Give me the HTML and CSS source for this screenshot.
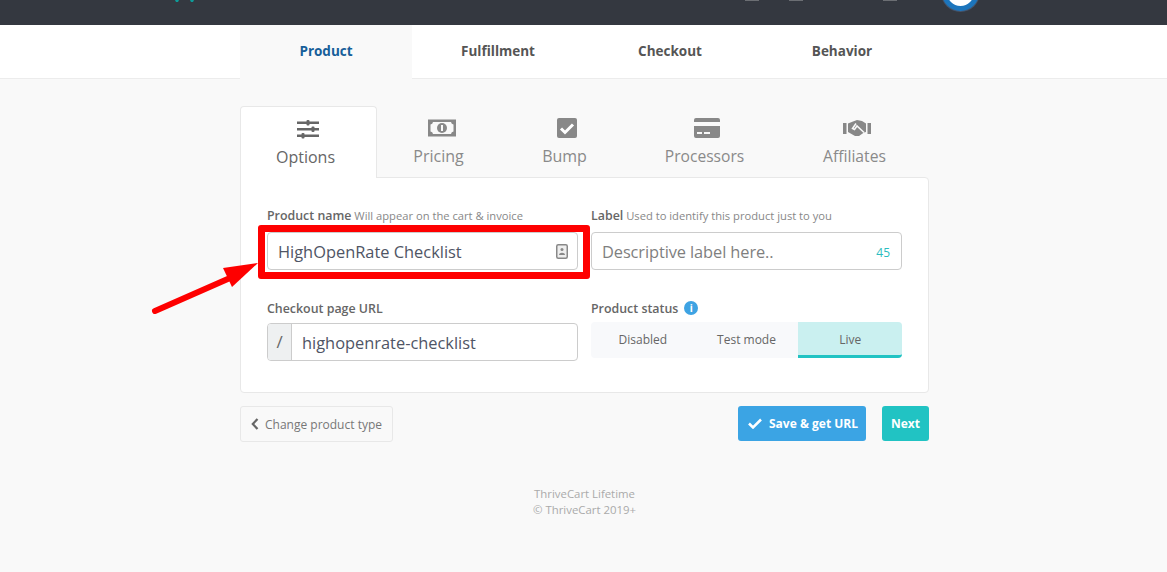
FILE: index.html
```html
<!DOCTYPE html>
<html lang="en">
<head>
  <meta charset="UTF-8" />
  <title>ThriveCart Product</title>
  <link rel="stylesheet" href="styles.css">
</head>
<body>

<header class="topbar">
  <svg class="logo-bit" width="24" height="3" viewBox="0 0 24 3"><path d="M3 0h4L6 2H4zM18 0h4l-1 2h-2z" fill="#0e9a98"/></svg>
  <div class="top-icons">
    <span class="stub"></span>
    <span class="stub"></span>
    <span class="stub stub-last"></span>
    <span class="avatar"></span>
  </div>
</header>

<nav class="steps">
  <div class="steps-inner">
    <a class="step active">Product</a>
    <a class="step">Fulfillment</a>
    <a class="step">Checkout</a>
    <a class="step">Behavior</a>
  </div>
</nav>

<main class="wrap">
  <div class="tabs">
    <a class="tab active tab-options">
      <svg width="22" height="20" viewBox="0 0 22 20" fill="#666"><path d="M0 2.500h22v2.500H0zM0 9h22v2.500H0zM0 15.500h22V18H0z"/><rect x="9.500" y="1" width="3" height="5.500" rx="1"/><rect x="14.500" y="7.500" width="3" height="5.500" rx="1"/><rect x="4.500" y="14" width="3" height="5.500" rx="1"/></svg>
      <span>Options</span>
    </a>
    <a class="tab tab-pricing">
      <svg width="28" height="17" viewBox="0 0 28 17"><path fill="#888" fill-rule="evenodd" d="M0 0h28v17H0zM5 2.500a3 3 0 0 1-2.500 2.500v7A3 3 0 0 1 5 14.500h18a3 3 0 0 1 2.500-2.500V5A3 3 0 0 1 23 2.500z"/><circle cx="14" cy="8.500" r="5" fill="#888"/><rect x="13" y="5.500" width="2" height="6" fill="#f9f9f9"/></svg>
      <span>Pricing</span>
    </a>
    <a class="tab tab-bump">
      <svg width="20" height="20" viewBox="0 0 20 20"><rect width="20" height="20" rx="2" fill="#888"/><path d="M4 10.500l4 4 8-8" fill="none" stroke="#fff" stroke-width="3"/></svg>
      <span>Bump</span>
    </a>
    <a class="tab tab-processors">
      <svg width="26" height="20" viewBox="0 0 26 20"><path fill="#888" d="M2 0h22a2 2 0 0 1 2 2v2H0V2a2 2 0 0 1 2-2zM0 8h26v10a2 2 0 0 1-2 2H2a2 2 0 0 1-2-2z"/><path fill="#f9f9f9" d="M3 14h5v2H3zM10 14h6v2h-6z"/></svg>
      <span>Processors</span>
    </a>
    <a class="tab tab-affiliates">
      <svg width="28" height="18" viewBox="0 0 28 18"><path fill="#888" d="M0 4h3.500v11H0zM24.500 4H28v11h-3.500zM5 4.500L10 2.500 14 1l5 1 4 2.500V13l-2 .500-5 3.500h-4L5 13z"/><path d="M13 4.500L9.500 9.500l2 1L14 7l7 6.500" fill="none" stroke="#f9f9f9" stroke-width="1.500"/></svg>
      <span>Affiliates</span>
    </a>
  </div>

  <section class="panel">
    <div class="field-grid">
      <div class="field">
        <label class="field-label"><b>Product name</b> Will appear on the cart &amp; invoice</label>
        <div class="input">
          <span class="value">HighOpenRate Checklist</span>
          <svg class="contact-icon" width="12" height="15" viewBox="0 0 12 15"><rect x=".75" y=".75" width="10.500" height="13.500" rx="1.500" fill="#eee" stroke="#888" stroke-width="1.500"/><circle cx="6" cy="5.500" r="1.500" fill="#888"/><path d="M3 11c0-3 6-3 6 0z" fill="#888"/></svg>
        </div>
      </div>
      <div class="field">
        <label class="field-label"><b>Label</b> Used to identify this product just to you</label>
        <div class="input">
          <span class="value placeholder">Descriptive label here..</span>
          <span class="counter">45</span>
        </div>
      </div>
      <div class="field field-low">
        <label class="field-label"><b>Checkout page URL</b></label>
        <div class="input input-url">
          <span class="prefix">/</span>
          <span class="value">highopenrate-checklist</span>
        </div>
      </div>
      <div class="field field-low">
        <label class="field-label"><b>Product status</b> <i class="info">i</i></label>
        <div class="status">
          <span class="status-opt">Disabled</span>
          <span class="status-opt">Test mode</span>
          <span class="status-opt live">Live</span>
        </div>
      </div>
    </div>
    <div class="highlight"></div>
  </section>

  <div class="actions">
    <a class="btn-back">
      <svg width="8" height="12" viewBox="0 0 8 12"><path d="M6.500 1L1.800 6l4.700 5" fill="none" stroke="#666" stroke-width="2.200"/></svg>
      Change product type
    </a>
    <div class="actions-right">
      <a class="btn btn-save">
        <svg width="14" height="11" viewBox="0 0 14 11"><path d="M1 5.500l4 4 8-8" fill="none" stroke="#fff" stroke-width="2.500"/></svg>
        Save &amp; get URL
      </a>
      <a class="btn btn-next">Next</a>
    </div>
  </div>

  <footer class="foot">
    ThriveCart Lifetime<br>
    &copy; ThriveCart 2019+
  </footer>
</main>

<svg class="arrow" width="110" height="60" viewBox="0 0 110 60">
  <path d="M5 51L80 18" stroke="#fe0000" stroke-width="6" stroke-linecap="round"/>
  <path d="M108 3L73 8 82 27z" fill="#fe0000"/>
</svg>

</body>
</html>
```

FILE: styles.css
```css
* {
  box-sizing: border-box;
}

body {
  margin: 0;
  background: #f9f9f9;
  font-family: "Open Sans", "Noto Sans", sans-serif;
  color: #555;
  position: relative;
  height: 572px;
  overflow: hidden;
}

.topbar {
  height: 25px;
  background: #343840;
  display: flex;
  justify-content: space-between;
}

.logo-bit {
  margin-left: 172px;
}

.top-icons {
  display: flex;
  margin-right: 188px;
  gap: 30px;
}

.stub {
  width: 14px;
  height: 1px;
  background: #6b6e73;
}

.stub-last {
  margin-left: 50px;
  margin-right: 15px;
}

.avatar {
  width: 37px;
  height: 37px;
  margin-top: -26px;
  border-radius: 50%;
  background: #fff;
  border: 5px solid #1c75bc;
  box-shadow: 0 0 0 1px #45546b;
}

.steps {
  height: 54px;
  background: #fff;
  border-bottom: 1px solid #ececec;
}

.steps-inner {
  width: 689px;
  margin-left: 240px;
  display: flex;
}

.step {
  width: 172px;
  height: 54px;
  line-height: 52px;
  text-align: center;
  font-size: 13.5px;
  font-weight: 700;
  color: #555;
}

.step.active {
  background: #f9f9f9;
  color: #175f9a;
}

.wrap {
  width: 689px;
  margin-left: 240px;
}

.tabs {
  display: flex;
  margin-top: 27px;
  height: 71px;
  position: relative;
  z-index: 1;
}

.tab {
  display: flex;
  flex-direction: column;
  align-items: center;
  font-size: 16px;
  color: #8a8a8a;
  padding-top: 12px;
}

.tab svg {
  height: 20px;
}

.tab span {
  margin-top: 7px;
  line-height: 22px;
}

.tab.active {
  background: #fff;
  border: 1px solid #e8e8e8;
  border-bottom: 0;
  border-radius: 4px 4px 0 0;
  color: #666;
  height: 72px;
  padding-top: 12px;
}

.tab-options { width: 137px; }
.tab-options svg { margin-right: 2px; }
.tab-options span { margin-right: 6px; }

.tab-pricing { width: 123px; }
.tab-pricing svg { margin-left: 6px; }

.tab-bump { width: 129px; }
.tab-bump svg { margin-left: 4px; }

.tab-processors { width: 156px; }
.tab-processors span { margin-right: 5px; font-size: 15.6px; }

.tab-affiliates { width: 144px; }
.tab-affiliates span { margin-right: 5px; font-size: 15.7px; }

.panel {
  background: #fff;
  border: 1px solid #e8e8e8;
  border-radius: 0 4px 4px 4px;
  height: 216px;
  padding: 22px 26px 0;
  position: relative;
}

.field-grid {
  display: grid;
  grid-template-columns: 311px 311px;
  column-gap: 13px;
  row-gap: 21px;
}

.field-label {
  display: block;
  font-size: 11.2px;
  line-height: 32px;
  height: 32px;
  color: #888;
  white-space: nowrap;
}

.field-low .field-label {
  line-height: 36px;
}

.field-label b {
  font-size: 12.4px;
  font-weight: 600;
  color: #666;
}

.input {
  height: 38px;
  border: 1px solid #ccc;
  border-radius: 4px;
  background: #fff;
  display: flex;
  align-items: center;
  justify-content: space-between;
  padding: 0 11px 0 10px;
  font-size: 16.4px;
  color: #4f5565;
}

.contact-icon {
  margin-right: -2px;
}

.placeholder {
  color: #7f7f7f;
  letter-spacing: -0.1px;
}

.counter {
  font-size: 12px;
  margin-top: 2px;
  color: #2bbdc0;
}

.input-url {
  padding: 0;
  justify-content: flex-start;
}

.prefix {
  width: 24px;
  height: 100%;
  background: #eef0f1;
  border-right: 1px solid #ccc;
  border-radius: 3px 0 0 3px;
  text-align: center;
  line-height: 36px;
  font-size: 17px;
  color: #666;
  margin-right: 10px;
}

.info {
  display: inline-block;
  width: 14px;
  height: 14px;
  margin-left: 3px;
  border-radius: 50%;
  background: #3ea3e3;
  color: #fff;
  font: 700 10px/14px "Open Sans", sans-serif;
  text-align: center;
  vertical-align: 1px;
}

.status {
  display: flex;
  height: 36px;
  margin-top: -1px;
  background: #f8f9fb;
  border-radius: 4px;
  font-size: 12px;
}

.status-opt {
  flex: 1;
  text-align: center;
  line-height: 35px;
  color: #666;
}

.status-opt.live {
  background: #caf0f0;
  border-bottom: 3px solid #21c3c3;
  border-radius: 0 4px 4px 0;
}

.highlight {
  position: absolute;
  left: 17px;
  top: 47px;
  width: 332px;
  height: 54px;
  border: 7px solid #fe0000;
  border-radius: 3px;
}

.actions {
  display: flex;
  justify-content: space-between;
  margin-top: 13px;
}

.btn-back {
  display: flex;
  align-items: center;
  gap: 6px;
  height: 36px;
  padding: 0 10px;
  border: 1px solid #e8e8e8;
  border-radius: 3px;
  font-size: 12px;
  color: #777;
}

.actions-right {
  display: flex;
  gap: 16px;
}

.btn {
  display: flex;
  align-items: center;
  height: 35px;
  border-radius: 3px;
  font-size: 12px;
  font-weight: 700;
  color: #fff;
}

.btn-save {
  width: 128px;
  padding-left: 10px;
  gap: 7px;
  background: #3ba4e4;
}

.btn-next {
  width: 47px;
  justify-content: center;
  background: #21c3c3;
}

.foot {
  margin-top: 44px;
  text-align: center;
  font-size: 11.4px;
  line-height: 16px;
  color: #aaa;
}

.arrow {
  position: absolute;
  left: 150px;
  top: 260px;
}
```
